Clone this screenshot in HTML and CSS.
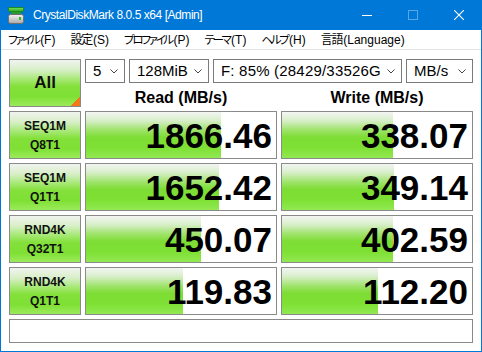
FILE: index.html
```html
<!DOCTYPE html>
<html lang="ja">
<head>
<meta charset="utf-8">
<title>CrystalDiskMark 8.0.5 x64 [Admin]</title>
<link rel="stylesheet" href="styles.css">
</head>
<body>
<div class="window">
  <header class="titlebar">
    <svg class="appicon" width="16" height="17" viewBox="0 0 16 17">
      <defs>
        <linearGradient id="lid" x1="0" y1="0" x2="0" y2="1">
          <stop offset="0" stop-color="#7fe05a"/>
          <stop offset="1" stop-color="#23a829"/>
        </linearGradient>
        <linearGradient id="body" x1="0" y1="0" x2="0" y2="1">
          <stop offset="0" stop-color="#f4f4f4"/>
          <stop offset="1" stop-color="#a8a8a8"/>
        </linearGradient>
      </defs>
      <rect x="0.5" y="0.5" width="15" height="4" rx="0.5" fill="url(#lid)" stroke="#1d8a22"/>
      <rect x="3" y="5" width="10" height="2" fill="#2a9a2e"/>
      <rect x="0.5" y="7.5" width="15" height="9" rx="2" fill="url(#body)" stroke="#6f6f6f"/>
      <rect x="11" y="10" width="2" height="3" fill="#2bbd2b"/>
    </svg>
    <span class="title">CrystalDiskMark 8.0.5 x64 [Admin]</span>
    <div class="controls">
      <span class="ctl"><svg width="10" height="10" viewBox="0 0 10 10"><line x1="0" y1="5.5" x2="10" y2="5.5" stroke="#fff"/></svg></span>
      <span class="ctl"><svg width="10" height="10" viewBox="0 0 10 10"><rect x="0.5" y="0.5" width="9" height="9" fill="none" stroke="#fff" stroke-opacity="0.35"/></svg></span>
      <span class="ctl"><svg width="10" height="10" viewBox="0 0 10 10"><path d="M0 0 L10 10 M10 0 L0 10" stroke="#fff" stroke-width="1.1"/></svg></span>
    </div>
  </header>
  <div class="frame">
    <nav class="menubar">
      <span class="mi"><span class="kana">ファイル</span>(F)</span>
      <span class="mi"><span class="kanji">設定</span>(S)</span>
      <span class="mi"><span class="kana">プロファイル</span>(P)</span>
      <span class="mi"><span class="kana">テーマ</span>(T)</span>
      <span class="mi"><span class="kana">ヘルプ</span>(H)</span>
      <span class="mi"><span class="kanji">言語</span>(Language)</span>
    </nav>
    <main class="client">
      <div class="grid">
        <div class="label all">All</div>
        <div class="top">
          <div class="selects">
            <div class="select s-count"><span class="val">5</span><svg class="chev" width="8" height="5" viewBox="0 0 8 5"><polyline points="0.5,0.5 4,4 7.5,0.5" fill="none" stroke="#444"/></svg></div>
            <div class="select s-size"><span class="val">128MiB</span><svg class="chev" width="8" height="5" viewBox="0 0 8 5"><polyline points="0.5,0.5 4,4 7.5,0.5" fill="none" stroke="#444"/></svg></div>
            <div class="select s-drive"><span class="val">F: 85% (28429/33526GiB)</span><svg class="chev" width="8" height="5" viewBox="0 0 8 5"><polyline points="0.5,0.5 4,4 7.5,0.5" fill="none" stroke="#444"/></svg></div>
            <div class="select s-unit"><span class="val">MB/s</span><svg class="chev" width="8" height="5" viewBox="0 0 8 5"><polyline points="0.5,0.5 4,4 7.5,0.5" fill="none" stroke="#444"/></svg></div>
          </div>
          <div class="heads">
            <div class="head">Read (MB/s)</div>
            <div class="head">Write (MB/s)</div>
          </div>
        </div>

        <div class="label"><span>SEQ1M</span><span>Q8T1</span></div>
        <div class="result" style="--w:135px">1866.46</div>
        <div class="result" style="--w:111px">338.07</div>

        <div class="label"><span>SEQ1M</span><span>Q1T1</span></div>
        <div class="result" style="--w:133px">1652.42</div>
        <div class="result" style="--w:112px">349.14</div>

        <div class="label"><span>RND4K</span><span>Q32T1</span></div>
        <div class="result" style="--w:115px">450.07</div>
        <div class="result" style="--w:111px">402.59</div>

        <div class="label"><span>RND4K</span><span>Q1T1</span></div>
        <div class="result" style="--w:97px">119.83</div>
        <div class="result" style="--w:96px">112.20</div>

        <div class="status"></div>
      </div>
    </main>
  </div>
</div>
</body>
</html>
```

FILE: styles.css
```css
* { box-sizing: border-box; }

html, body {
  margin: 0;
  padding: 0;
  background: #ffffff;
}

body {
  width: 482px;
  height: 352px;
  overflow: hidden;
  font-family: "Liberation Sans", "Noto Sans CJK JP", sans-serif;
  color: #000;
}

.window {
  width: 482px;
  height: 352px;
  overflow: hidden;
  display: flex;
  flex-direction: column;
}

.titlebar {
  height: 30px;
  flex: none;
  background: #0078d7;
  display: flex;
  align-items: center;
  padding-left: 8px;
  color: #fff;
}

.appicon {
  flex: none;
}

.title {
  margin-left: 9px;
  font-family: "Liberation Sans", sans-serif;
  font-size: 12px;
  line-height: 16px;
  letter-spacing: -0.45px;
  white-space: nowrap;
}

.controls {
  margin-left: auto;
  display: flex;
  height: 30px;
}

.ctl {
  width: 46px;
  height: 30px;
  display: flex;
  align-items: center;
  justify-content: center;
}

.frame {
  flex: 1;
  min-height: 0;
  display: flex;
  flex-direction: column;
  border: 1px solid #0078d7;
  border-top: 0;
}

.menubar {
  height: 20px;
  flex: none;
  display: flex;
  align-items: center;
  padding-left: 7px;
  gap: 15px;
  border-bottom: 1px solid #e3e3e3;
  font-family: "Liberation Sans", "Noto Sans CJK JP", sans-serif;
  font-size: 12px;
  line-height: 16px;
  color: #000;
  white-space: nowrap;
}

.kana {
  font-feature-settings: "palt";
  font-size: 11.5px;
  letter-spacing: -2.3px;
  margin-right: 1.5px;
}

.kanji {
  letter-spacing: -1.2px;
  margin-right: 1px;
}

.client {
  flex: 1;
  min-height: 0;
  padding: 9px 8px 8px 8px;
}

.grid {
  display: grid;
  grid-template-columns: 72px 192px 192px;
  grid-template-rows: 48px 48px 48px 48px 48px 24px;
  column-gap: 4px;
  row-gap: 4px;
}

.label {
  border: 1px solid #8a8a8a;
  background: linear-gradient(to bottom, #f1f4ef 0%, #d7efc7 22%, #a6e874 42%, #83e03a 58%, #7fe034 80%, #9beb5c 100%);
  display: flex;
  flex-direction: column;
  align-items: center;
  justify-content: center;
  gap: 3px;
  font-weight: bold;
  font-size: 12px;
  line-height: 16px;
  color: #111;
}

.all {
  font-size: 17px;
  line-height: 20px;
  background:
    linear-gradient(to bottom right, transparent 50%, #f27a1a 50%) right bottom / 9px 9px no-repeat,
    linear-gradient(to bottom, #f1f4ef 0%, #d7efc7 22%, #a6e874 42%, #83e03a 58%, #7fe034 80%, #9beb5c 100%);
}

.top {
  grid-column: 2 / 4;
  display: flex;
  flex-direction: column;
}

.selects {
  height: 24px;
  display: flex;
  gap: 4px;
}

.select {
  height: 24px;
  border: 1px solid #7a7a7a;
  background: #fff;
  display: flex;
  align-items: center;
  padding-left: 7px;
  padding-right: 6px;
  font-family: "Liberation Sans", sans-serif;
  font-size: 15px;
  line-height: 18px;
  overflow: hidden;
}

.select .val {
  flex: 1;
  min-width: 0;
  overflow: hidden;
  white-space: nowrap;
}

.s-drive .val {
  letter-spacing: 0.2px;
}

.chev {
  flex: none;
  margin-left: 6px;
}

.s-count { width: 40px; }
.s-size  { width: 80px; }
.s-drive { width: 189px; }
.s-unit  { width: 67px; }

.heads {
  height: 24px;
  display: grid;
  grid-template-columns: 192px 192px;
  column-gap: 4px;
}

.head {
  display: flex;
  align-items: center;
  justify-content: center;
  font-weight: bold;
  font-size: 16px;
  line-height: 18px;
  padding-top: 6px;
}

.result {
  border: 1px solid #8a8a8a;
  background:
    linear-gradient(to bottom, #f3f5f2 0%, #d9efcc 18%, #a2e470 38%, #7ddd34 55%, #7ee034 78%, #92e852 100%) left top / var(--w) 100% no-repeat,
    #ffffff;
  display: flex;
  align-items: center;
  justify-content: flex-end;
  padding-right: 4px;
  padding-top: 2px;
  font-weight: bold;
  font-size: 35px;
  line-height: 40px;
  color: #000;
  white-space: nowrap;
}

.status {
  grid-column: 1 / -1;
  border: 1px solid #8a8a8a;
  background: #fff;
}
```
